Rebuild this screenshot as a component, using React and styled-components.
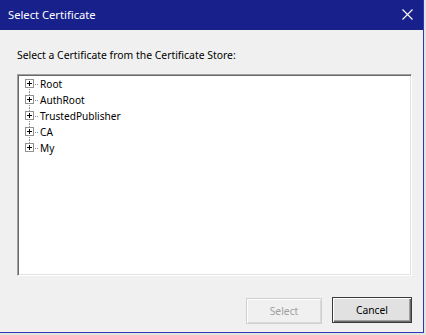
import React from "react";
import styled, { createGlobalStyle } from "styled-components";

const Global = createGlobalStyle`
  html, body { margin: 0; padding: 0; }
  body {
    background: #e4e4e4;
    width: 426px;
    height: 335px;
    overflow: hidden;
    font-family: "Noto Sans", "Open Sans", sans-serif;
  }
`;

const Dialog = styled.div`
  width: 424px;
  height: 333px;
  box-sizing: border-box;
  border-right: 1px solid #2c39b6;
  border-bottom: 1px solid #2c39b6;
  background: #f0f0f0;
  display: flex;
  flex-direction: column;
`;

const TitleBar = styled.div`
  height: 30px;
  flex: none;
  background: #18208c;
  display: flex;
  align-items: center;
  justify-content: space-between;
  padding: 0 10px 0 8px;
  color: #ffffff;
`;

const Title = styled.span`
  font-size: 11.2px;
  line-height: 16px;
  margin-top: -1px;
`;

const CloseIcon = styled.svg`
  width: 11px;
  height: 11px;
  display: block;
  margin-top: -1px;
`;

const Body = styled.div`
  flex: 1;
  display: flex;
  flex-direction: column;
  padding: 17px 11px 0 17px;
`;

const Label = styled.div`
  font-size: 10.4px;
  line-height: 16px;
  color: #000;
  margin-bottom: 11px;
`;

const TreeBox = styled.div`
  width: 395px;
  height: 202px;
  box-sizing: border-box;
  background: #fff;
  border-style: solid;
  border-width: 1px;
  border-color: #a0a0a0 #ffffff #ffffff #a0a0a0;
  box-shadow: inset 1px 1px 0 #696969, inset -1px -1px 0 #e3e3e3;
  padding: 1px 2px;
`;

const Row = styled.div`
  height: 16px;
  display: flex;
  align-items: center;
`;

const RowText = styled.span`
  font-size: 10.1px;
  line-height: 16px;
  color: #000;
  white-space: nowrap;
`;

const Footer = styled.div`
  display: flex;
  justify-content: flex-end;
  gap: 10px;
  margin-top: 22px;
`;

const Button = styled.button`
  font-family: inherit;
  font-size: 10.3px;
  height: 26px;
  width: ${(p) => (p.$wide ? "80px" : "76px")};
  padding: 0;
  background: ${(p) => (p.disabled ? "#f0f0f0" : "#e1e1e1")};
  color: ${(p) => (p.disabled ? "#a0a0a0" : "#000")};
  border: 1px solid ${(p) => (p.disabled ? "#cfcfcf" : "#3c3c3c")};
  box-shadow: ${(p) =>
    p.disabled
      ? "inset 1px 1px 0 #ffffff, inset -1px -1px 0 #dadada"
      : "inset 1px 1px 0 #ffffff, inset -1px -1px 0 #696969, inset -2px -2px 0 #a0a0a0"};
  box-sizing: border-box;
  margin-top: ${(p) => (p.$wide ? "-1px" : "0")};
`;

const Dots = ({ x, y1, y2 }) => {
  const r = [];
  for (let y = y1; y <= y2; y += 2) r.push(<rect key={y} x={x} y={y} width="1" height="1" />);
  return r;
};

const Expander = ({ first, last }) => (
  <svg width="20" height="16" viewBox="0 0 20 16" shapeRendering="crispEdges" style={{ display: "block", flex: "none" }}>
    <g fill="#8a8a8a">
      {!first && <Dots x={9} y1={0} y2={3} />}
      {!last && <Dots x={9} y1={13} y2={15} />}
      <rect x="15" y="8" width="1" height="1" />
      <rect x="17" y="8" width="1" height="1" />
    </g>
    <rect x="5.5" y="3.5" width="8" height="8" fill="#fff" stroke="#919191" strokeWidth="1" />
    <rect x="7" y="7" width="5" height="1" fill="#000" />
    <rect x="9" y="5" width="1" height="5" fill="#000" />
  </svg>
);

const items = ["Root", "AuthRoot", "TrustedPublisher", "CA", "My"];

export default function App() {
  return (
    <>
      <Global />
      <Dialog>
        <TitleBar>
          <Title>Select Certificate</Title>
          <CloseIcon viewBox="0 0 11 11">
            <path d="M0.5 0.5 L10.5 10.5 M10.5 0.5 L0.5 10.5" stroke="#fff" strokeWidth="1.1" fill="none" />
          </CloseIcon>
        </TitleBar>
        <Body>
          <Label>Select a Certificate from the Certificate Store:</Label>
          <TreeBox>
            {items.map((t, i) => (
              <Row key={t}>
                <Expander first={i === 0} last={i === items.length - 1} />
                <RowText>{t}</RowText>
              </Row>
            ))}
          </TreeBox>
          <Footer>
            <Button disabled>Select</Button>
            <Button $wide>Cancel</Button>
          </Footer>
        </Body>
      </Dialog>
    </>
  );
}
